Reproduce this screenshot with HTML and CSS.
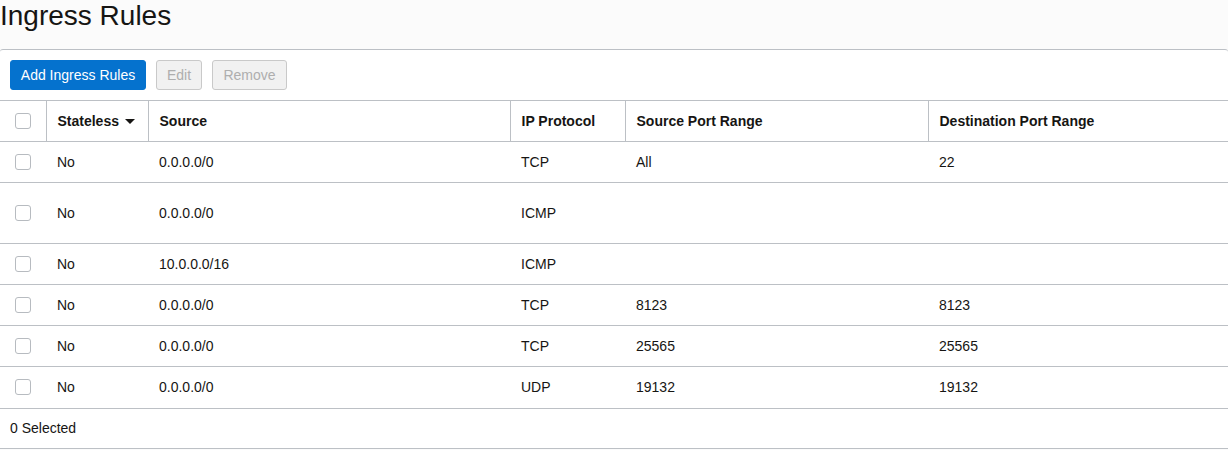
FILE: index.html
```html
<!DOCTYPE html>
<html>
<head>
<meta charset="utf-8">
<link rel="stylesheet" href="styles.css">
</head>
<body>
<div class="page">
  <div class="title-bar"><h1 class="title">Ingress Rules</h1></div>
  <div class="panel">
    <div class="toolbar">
      <button class="btn btn-primary">Add Ingress Rules</button>
      <button class="btn btn-disabled btn-edit">Edit</button>
      <button class="btn btn-disabled btn-remove">Remove</button>
    </div>
    <table class="grid">
      <colgroup>
        <col class="c-check"><col class="c-state"><col class="c-src"><col class="c-proto"><col class="c-sport"><col class="c-dport">
      </colgroup>
      <thead>
        <tr>
          <th class="cell-check"><span class="checkbox"></span></th>
          <th>Stateless <span class="caret"></span></th>
          <th>Source</th>
          <th>IP Protocol</th>
          <th>Source Port Range</th>
          <th class="last">Destination Port Range</th>
        </tr>
      </thead>
      <tbody>
        <tr><td class="cell-check"><span class="checkbox"></span></td><td>No</td><td>0.0.0.0/0</td><td>TCP</td><td>All</td><td>22</td></tr>
        <tr class="tall"><td class="cell-check"><span class="checkbox"></span></td><td>No</td><td>0.0.0.0/0</td><td>ICMP</td><td></td><td></td></tr>
        <tr><td class="cell-check"><span class="checkbox"></span></td><td>No</td><td>10.0.0.0/16</td><td>ICMP</td><td></td><td></td></tr>
        <tr><td class="cell-check"><span class="checkbox"></span></td><td>No</td><td>0.0.0.0/0</td><td>TCP</td><td>8123</td><td>8123</td></tr>
        <tr><td class="cell-check"><span class="checkbox"></span></td><td>No</td><td>0.0.0.0/0</td><td>TCP</td><td>25565</td><td>25565</td></tr>
        <tr><td class="cell-check"><span class="checkbox"></span></td><td>No</td><td>0.0.0.0/0</td><td>UDP</td><td>19132</td><td>19132</td></tr>
      </tbody>
    </table>
    <div class="footer">0 Selected</div>
  </div>
</div>
</body>
</html>
```

FILE: styles.css
```css
* { box-sizing: border-box; }
html, body { margin: 0; padding: 0; background: #fbfbfb; }
body { font-family: "Liberation Sans", Arial, sans-serif; color: #161513; width: 1228px; }
.title-bar { height: 49px; background: #fbfbfb; }
.title { margin: 0; font-size: 28px; font-weight: normal; line-height: 32px; color: #161513; }
.panel { background: #fff; border-top: 1px solid #bcc0c5; border-bottom: 1px solid #bcc0c5; border-radius: 3px 3px 0 0; }
.toolbar { display: flex; gap: 10px; padding: 10px; height: 50px; }
.btn { height: 30px; font-family: "Liberation Sans", Arial, sans-serif; font-size: 14px; border-radius: 3px; padding: 0; border: 1px solid; white-space: nowrap; }
.btn-primary { background: #0572ce; border-color: #0572ce; color: #fff; width: 136px; }
.btn-disabled { background: #f1f1f1; border-color: #c9c9c9; color: #aeaeae; }
.btn-edit { width: 46px; }
.btn-remove { width: 75px; }
.grid { width: 100%; border-collapse: collapse; font-size: 14px; table-layout: fixed; }
.c-check { width: 46px; }
.c-state { width: 102px; }
.c-src { width: 362px; }
.c-proto { width: 115px; }
.c-sport { width: 303px; }
.c-dport { width: 300px; }
.grid th, .grid td { text-align: left; padding: 0 11px; height: 41px; border-top: 1px solid #bcc0c5; vertical-align: middle; }
.grid th { font-weight: bold; border-left: 1px solid #bcc0c5; }
.grid th:first-child { border-left: none; }
.grid tr.tall td { height: 61px; }
.grid .cell-check { padding: 0 0 0 15px; }
.checkbox { display: block; width: 16px; height: 16px; border: 1px solid #b7bbc0; border-radius: 3px; background: #fff; }
.caret { display: inline-block; width: 0; height: 0; border-left: 5px solid transparent; border-right: 5px solid transparent; border-top: 5px solid #161513; vertical-align: middle; margin-left: 2px; position: relative; top: -1px; }
.footer { border-top: 1px solid #bcc0c5; height: 40px; font-size: 14px; padding: 0 10px; display: flex; align-items: center; }
```
